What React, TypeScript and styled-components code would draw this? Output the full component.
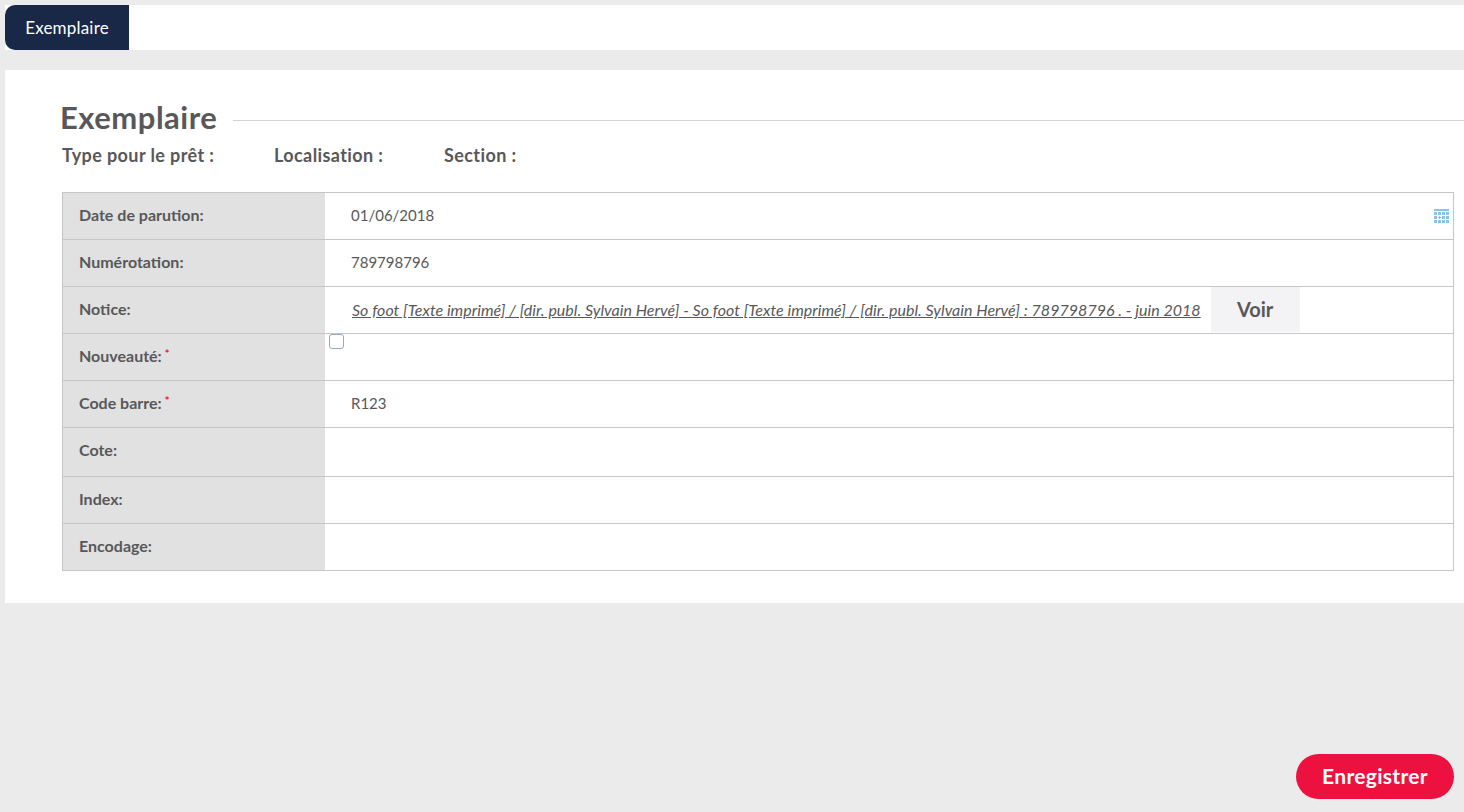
import React from 'react';
import styled, { createGlobalStyle } from 'styled-components';

const GlobalStyle = createGlobalStyle`
  html, body {
    margin: 0;
    padding: 0;
    height: 100%;
    background: #ebebeb;
    font-family: Lato, "Open Sans", sans-serif;
    color: #58585a;
    overflow: hidden;
  }
`;

const Page = styled.div`
  box-sizing: border-box;
  height: 812px;
  padding: 5px 0 13px 5px;
  display: flex;
  flex-direction: column;
`;

const TabBar = styled.div`
  height: 45px;
  background: #fff;
  display: flex;
  flex-shrink: 0;
`;

const Tab = styled.div`
  width: 124px;
  padding-bottom: 1px;
  box-sizing: border-box;
  display: flex;
  align-items: center;
  justify-content: center;
  background: #192847;
  color: #fff;
  font-size: 17px;
  letter-spacing: 0.2px;
  border-radius: 10px 0 0 10px;
`;

const Panel = styled.section`
  margin-top: 20px;
  height: 533px;
  flex-shrink: 0;
  box-sizing: border-box;
  background: #fff;
  padding: 30px 10px 0 56px;
`;

const TitleRow = styled.div`
  display: flex;
  align-items: center;
  gap: 16px;
  height: 36px;
  margin: 0 -10px 0 -1px;
`;

const Title = styled.h2`
  margin: -2px 0 0;
  font-size: 31px;
  font-weight: 700;
  letter-spacing: 0.5px;
  line-height: 36px;
  color: #58585a;
`;

const TitleRule = styled.div`
  flex: 1;
  height: 1px;
  margin-top: 5px;
  background: #d2d2d2;
`;

const Meta = styled.div`
  display: flex;
  margin: 4px 0 0 1px;
  height: 30px;
  align-items: center;
`;

const MetaItem = styled.span<{ $width: number }>`
  width: ${({ $width }) => $width}px;
  font-size: 18px;
  letter-spacing: 0.4px;
  font-weight: 700;
`;

const Table = styled.div`
  margin: 22px 0 0 1px;
  border: 1px solid #c6c6c6;
  border-bottom: 0;
`;

const Row = styled.div<{ $height?: number }>`
  display: grid;
  grid-template-columns: 262px 1fr;
  height: ${({ $height }) => $height ?? 47}px;
  border-bottom: 1px solid #c6c6c6;
  box-sizing: border-box;
`;

const Label = styled.div<{ $lift?: number }>`
  background: #e1e1e1;
  padding: 0 0 ${({ $lift }) => $lift ?? 4}px 16px;
  display: flex;
  align-items: center;
  font-size: 16px;
  font-weight: 700;
`;

const Required = styled.span`
  color: #ed1140;
  font-size: 11px;
  margin: -3px 0 0 3px;
`;

const Value = styled.div`
  position: relative;
  display: flex;
  align-items: center;
  padding: 0 0 2px 26px;
  font-size: 15px;
  min-width: 0;
`;

const NoticeValue = styled(Value)`
  padding: 0 0 0 27px;
`;

const NoticeLink = styled.a`
  font-size: 16px;
  font-style: italic;
  letter-spacing: 0.025px;
  color: #58585a;
  text-decoration: underline;
  white-space: nowrap;
  margin-top: -1px;
`;

const VoirButton = styled.button`
  width: 89px;
  height: 45px;
  margin-left: 10px;
  padding: 0 0 2px;
  align-self: flex-start;
  border: 0;
  background: #f3f3f5;
  color: #58585a;
  font-family: inherit;
  font-size: 20px;
  font-weight: 700;
`;

const CheckCell = styled(Value)`
  padding: 0 0 0 4px;
  align-items: flex-start;
`;

const Check = styled.span`
  width: 13px;
  height: 13px;
  border: 1px solid #9aa7cc;
  border-radius: 3px;
  background: #fff;
`;

const CalendarIcon = styled.svg`
  position: absolute;
  right: 4px;
  top: 16px;
`;

const Footer = styled.div`
  margin-top: auto;
  display: flex;
  justify-content: flex-end;
  padding-right: 10px;
`;

const SaveButton = styled.button`
  width: 158px;
  height: 45px;
  padding: 0 0 2px;
  border: 0;
  border-radius: 23px;
  background: #ed1140;
  color: #fff;
  font-family: inherit;
  font-size: 21px;
  letter-spacing: 0.3px;
  font-weight: 700;
`;

const calendarRows = [3, 7, 11];
const calendarCols = [0, 4, 8, 12];

const Calendar = () => (
  <CalendarIcon width="15" height="14" viewBox="0 0 15 14" fill="#8cc1e8">
    <rect x="0" y="0" width="15" height="2" />
    {calendarRows.map((y) =>
      calendarCols.map((x) =>
        x === 4 && y === 7 ? (
          <path key={`${x}-${y}`} d="M5 7h1v1h1v1H6v1H5V9H4V8h1z" />
        ) : (
          <rect key={`${x}-${y}`} x={x} y={y} width="3" height="3" />
        ),
      ),
    )}
  </CalendarIcon>
);

const App: React.FC = () => (
  <>
    <GlobalStyle />
    <Page>
      <TabBar>
        <Tab>Exemplaire</Tab>
      </TabBar>
      <Panel>
        <TitleRow>
          <Title>Exemplaire</Title>
          <TitleRule />
        </TitleRow>
        <Meta>
          <MetaItem $width={212}>Type pour le prêt :</MetaItem>
          <MetaItem $width={170}>Localisation :</MetaItem>
          <MetaItem $width={100}>Section :</MetaItem>
        </Meta>
        <Table>
          <Row>
            <Label>Date de parution:</Label>
            <Value>
              01/06/2018
              <Calendar />
            </Value>
          </Row>
          <Row>
            <Label>Numérotation:</Label>
            <Value>789798796</Value>
          </Row>
          <Row>
            <Label>Notice:</Label>
            <NoticeValue>
              <NoticeLink>
                So foot [Texte imprimé] / [dir. publ. Sylvain Hervé] - So foot [Texte imprimé] / [dir. publ. Sylvain Hervé] : 789798796 . - juin 2018
              </NoticeLink>
              <VoirButton>Voir</VoirButton>
            </NoticeValue>
          </Row>
          <Row>
            <Label>
              Nouveauté:<Required>*</Required>
            </Label>
            <CheckCell>
              <Check />
            </CheckCell>
          </Row>
          <Row>
            <Label>
              Code barre:<Required>*</Required>
            </Label>
            <Value>R123</Value>
          </Row>
          <Row $height={49}>
            <Label $lift={6}>Cote:</Label>
            <Value />
          </Row>
          <Row>
            <Label>Index:</Label>
            <Value />
          </Row>
          <Row>
            <Label>Encodage:</Label>
            <Value />
          </Row>
        </Table>
      </Panel>
      <Footer>
        <SaveButton>Enregistrer</SaveButton>
      </Footer>
    </Page>
  </>
);

export default App;
